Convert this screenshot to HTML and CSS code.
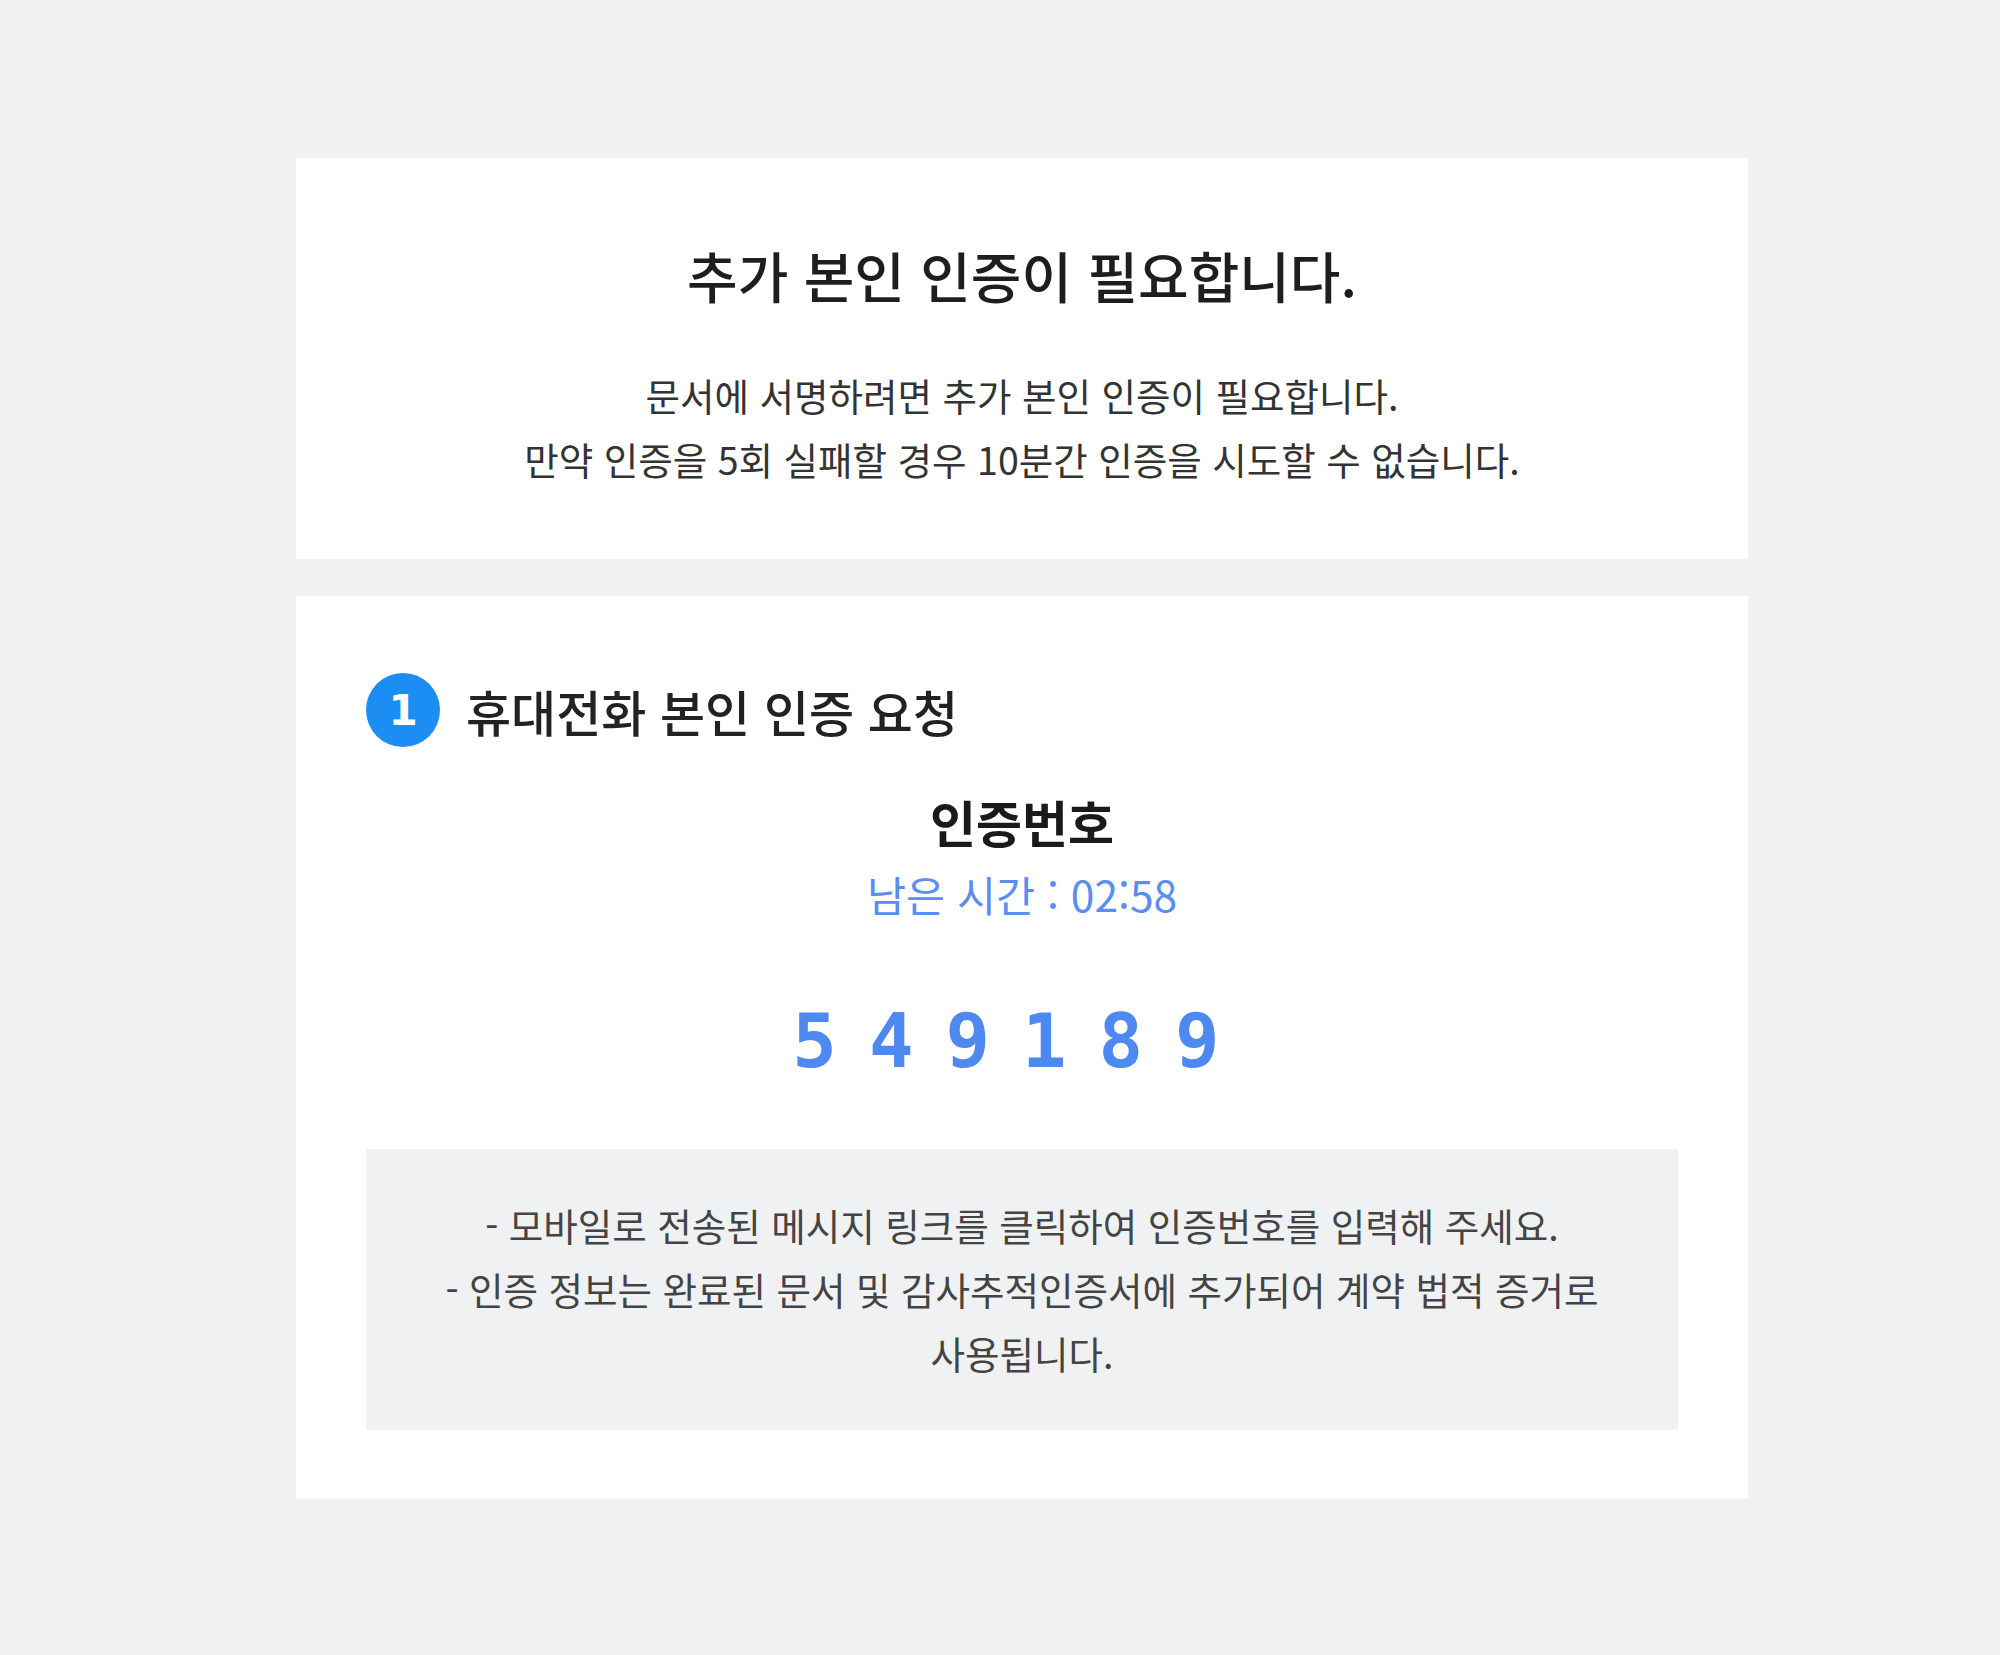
FILE: index.html
```html
<!DOCTYPE html>
<html lang="ko">
<head>
  <meta charset="UTF-8" />
  <meta name="viewport" content="width=device-width, initial-scale=1.0"/>
  <title>추가 본인 인증</title>
  <link rel="stylesheet" href="styles.css">
</head>
<body>
  <div class="page">
    <section class="card intro">
      <h1 class="intro-title">추가 본인 인증이 필요합니다.</h1>
      <p class="intro-text">문서에 서명하려면 추가 본인 인증이 필요합니다.<br>만약 인증을 5회 실패할 경우 10분간 인증을 시도할 수 없습니다.</p>
    </section>

    <section class="card verify">
      <div class="step">
        <span class="step-num">1</span>
        <h2 class="step-title">휴대전화 본인 인증 요청</h2>
      </div>

      <div class="code-area">
        <div class="code-label">인증번호</div>
        <div class="timer">남은 시간 : 02:58</div>
        <div class="code">549189</div>
      </div>

      <div class="notice">
        <p>- 모바일로 전송된 메시지 링크를 클릭하여 인증번호를 입력해 주세요.</p>
        <p>- 인증 정보는 완료된 문서 및 감사추적인증서에 추가되어 계약 법적 증거로 사용됩니다.</p>
      </div>
    </section>
  </div>
</body>
</html>
```

FILE: styles.css
```css
* {
  margin: 0;
  padding: 0;
  box-sizing: border-box;
}

body {
  font-family: "Noto Sans CJK KR", "Noto Sans", sans-serif;
  background-color: #f0f1f3;
  color: #222;
  word-break: keep-all;
}

.page {
  width: 1452px;
  margin: 158px 0 0 296px;
  display: flex;
  flex-direction: column;
  gap: 37px;
}

.card {
  background: #fff;
  text-align: center;
}

/* 상단 안내 */
.intro {
  padding: 83px 70px 68px;
}

.intro-title {
  font-size: 55px;
  font-weight: 500;
  line-height: 67px;
  color: #1e1e1e;
}

.intro-text {
  margin-top: 55px;
  font-size: 37.5px;
  line-height: 64px;
  color: #333;
}

/* 인증 영역 */
.verify {
  padding: 77px 70px 69px;
}

.step {
  display: flex;
  align-items: center;
  gap: 26px;
  height: 74px;
}

.step-num {
  width: 74px;
  height: 74px;
  border-radius: 50%;
  background: #1b8df3;
  color: #fff;
  font-family: "DejaVu Sans", sans-serif;
  font-weight: bold;
  font-size: 42px;
  display: flex;
  align-items: center;
  justify-content: center;
}

.step-title {
  font-size: 49px;
  font-weight: 500;
  color: #222;
}

.code-area {
  margin-top: 44px;
}

.code-label {
  font-size: 50px;
  font-weight: bold;
  line-height: 60px;
  color: #1a1a1a;
}

.timer {
  margin-top: 14px;
  font-size: 42.5px;
  line-height: 58px;
  color: #5a8ef2;
}

.code {
  margin-top: 68px;
  font-family: "DejaVu Sans Mono", monospace;
  font-weight: bold;
  font-size: 74px;
  line-height: 100px;
  letter-spacing: 32px;
  color: #4d89f0;
}

.notice {
  margin-top: 58px;
  background: #f0f1f3;
  padding: 44px 70px 45px;
  font-size: 37.5px;
  line-height: 64px;
  color: #444;
}
```
